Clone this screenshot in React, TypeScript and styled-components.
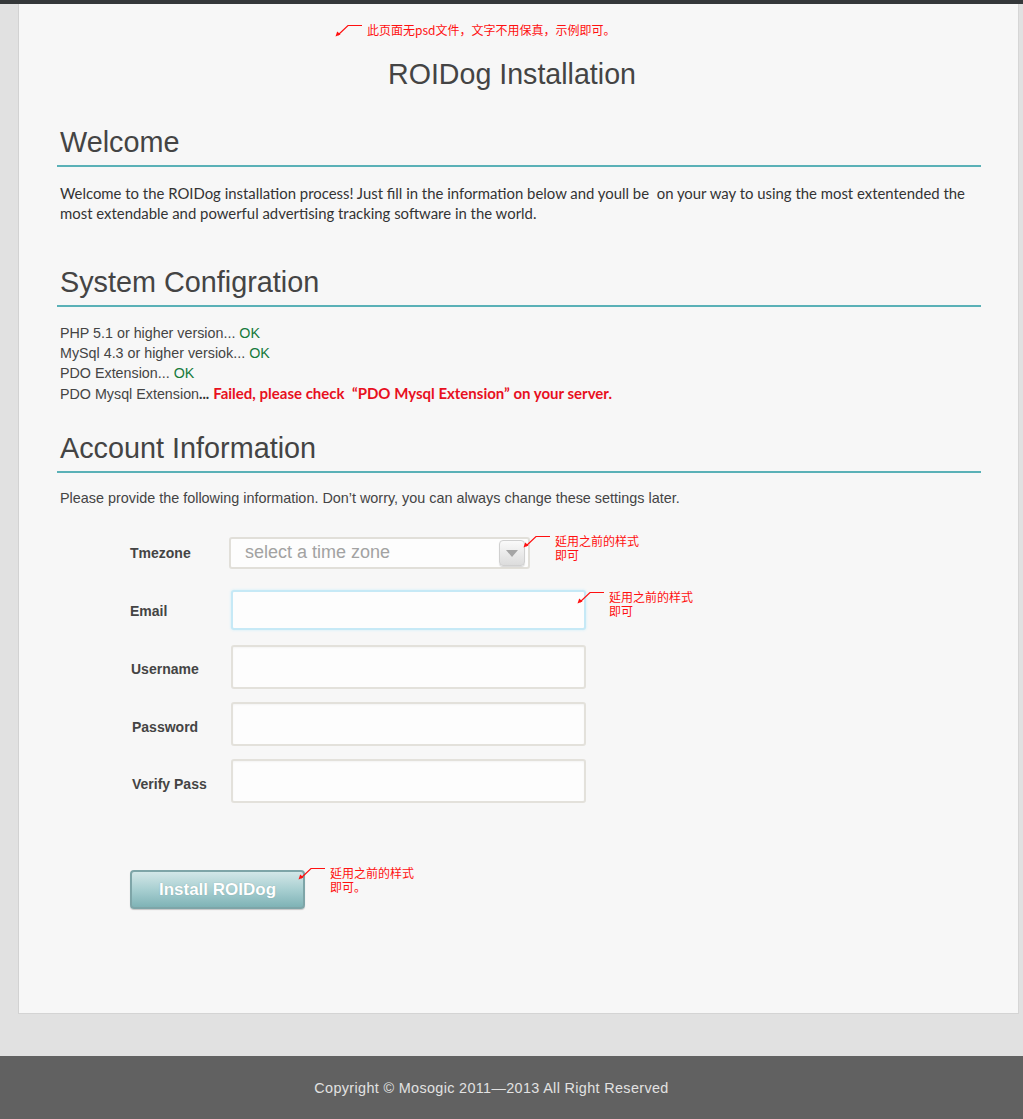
import React from "react";
import styled, { createGlobalStyle } from "styled-components";

const Global = createGlobalStyle`
  html, body { margin: 0; padding: 0; }
  body {
    background: #e1e1e1;
    font-family: "Liberation Sans", Arial, sans-serif;
    color: #444;
  }
`;

const Page = styled.div`
  display: flex;
  flex-direction: column;
  min-height: 1119px;
`;

const TopBar = styled.div`
  height: 4px;
  background: #35383a;
`;

const Panel = styled.main`
  margin: 0 4px 0 18px;
  height: 1010px;
  box-sizing: border-box;
  background: #f7f7f7;
  border-left: 1px solid #d2d2d2;
  border-right: 1px solid #d6d6d6;
  border-bottom: 1px solid #d4d4d4;
  padding-top: 19px;
  display: flex;
  flex-direction: column;
`;

const Note = styled.div`
  display: flex;
  align-items: center;
  gap: 4px;
  padding-left: 316px;
  height: 14px;
`;

const NoteText = styled.span`
  font-family: "Noto Sans CJK SC", "Noto Sans", sans-serif;
  font-size: 12px;
  line-height: 14px;
  color: #ff1010;
  white-space: nowrap;
`;

const Title = styled.h1`
  margin: 21px 13px 0 0;
  font-size: 28.6px;
  line-height: 32px;
  font-weight: normal;
  text-align: center;
  color: #444;
`;

const Section = styled.section<{ $top: number }>`
  margin: ${(p) => p.$top}px 37px 0 38px;
`;

const Heading = styled.h2`
  margin: 0;
  padding: 0 0 7px 3px;
  font-size: 28.8px;
  line-height: 32px;
  font-weight: normal;
  color: #444;
  border-bottom: 2px solid #5ab1b7;
`;

const Paragraph = styled.p`
  margin: 16px 0 0 3px;
  max-width: 920px;
  font-family: Lato, "Open Sans", sans-serif;
  font-size: 14.9px;
  line-height: 20px;
  color: #333;
`;

const CheckList = styled.ul`
  list-style: none;
  margin: 16px 0 0 3px;
  padding: 0;
`;

const CheckItem = styled.li`
  font-size: 14.3px;
  line-height: 20px;
  color: #444;
`;

const Ok = styled.span`
  color: #167a3c;
`;

const Failed = styled.span`
  font-family: Lato, "Open Sans", sans-serif;
  font-weight: bold;
  font-size: 15px;
  color: #e8101e;
`;

const Dots = styled.span`
  font-family: Lato, sans-serif;
  font-weight: bold;
  color: #333;
`;

const Intro = styled.p`
  margin: 15px 0 0 3px;
  font-size: 14.4px;
  line-height: 20px;
  color: #444;
`;

const Form = styled.div`
  margin: 16px 0 0 111px;
  display: flex;
  flex-direction: column;
`;

const Row = styled.div`
  position: relative;
  display: grid;
  grid-template-columns: 99px auto;
  align-items: center;
  height: 57px;
`;

const Label = styled.label<{ $shift?: number; $dy?: number }>`
  font-size: 14px;
  font-weight: bold;
  color: #444;
  padding-left: ${(p) => p.$shift ?? 0}px;
  transform: translateY(${(p) => p.$dy ?? 0}px);
`;

const SelectBox = styled.div`
  width: 301px;
  height: 32px;
  box-sizing: border-box;
  border: 2px solid #e1dfd9;
  border-radius: 3px;
  background: #fdfdfd;
  display: flex;
  align-items: center;
  justify-content: space-between;
  padding: 0 3px 0 14px;
`;

const Placeholder = styled.span`
  font-size: 18px;
  color: #a2a2a2;
`;

const DropButton = styled.span`
  width: 26px;
  height: 26px;
  box-sizing: border-box;
  border: 1px solid #d0d0d0;
  border-radius: 4px;
  background: linear-gradient(#fafafa, #dcdcdc);
  display: flex;
  align-items: center;
  justify-content: center;
  box-shadow: 0 1px 1px rgba(0, 0, 0, 0.15);
  &::after {
    content: "";
    border-left: 6px solid transparent;
    border-right: 6px solid transparent;
    border-top: 7px solid #a5a5a5;
    margin-top: 2px;
  }
`;

const Field = styled.input<{ $focus?: boolean }>`
  width: 355px;
  height: ${(p) => (p.$focus ? 40 : 44)}px;
  box-sizing: border-box;
  margin-left: 2px;
  border: 2px solid ${(p) => (p.$focus ? "#c6e9f6" : "#e3e1db")};
  border-radius: 3px;
  background: #fdfdfd;
  box-shadow: ${(p) =>
    p.$focus ? "0 0 3px #cdeef9" : "inset 0 1px 2px rgba(0,0,0,0.04)"};
  outline: none;
  font-size: 14px;
  padding: 0 10px;
`;

const ButtonRow = styled.div`
  position: relative;
  margin: 61px 0 0 111px;
`;

const InstallButton = styled.button`
  width: 175px;
  height: 39px;
  border: 2px solid #7ea5a8;
  border-radius: 4px;
  background: linear-gradient(#d3e7e8 0%, #a8cfd1 50%, #7fb3b6 100%);
  color: #fff;
  font-family: "Liberation Sans", Arial, sans-serif;
  font-weight: bold;
  font-size: 17px;
  text-shadow: 0 0 1px rgba(80, 120, 122, 0.5);
  box-shadow: 0 1px 1px rgba(0, 0, 0, 0.2);
  cursor: pointer;
`;

const Annotation = styled.div<{ $left: number; $top: number }>`
  position: absolute;
  left: ${(p) => p.$left}px;
  top: ${(p) => p.$top}px;
  display: flex;
  align-items: flex-start;
  gap: 4px;
`;

const AnnoText = styled.span`
  font-family: "Noto Sans CJK SC", "Noto Sans", sans-serif;
  font-size: 12px;
  line-height: 14px;
  color: #ff1010;
  white-space: pre;
`;

const Spacer = styled.div`
  flex: 1;
`;

const Footer = styled.footer`
  height: 63px;
  background: #616161;
  display: flex;
  align-items: center;
  justify-content: center;
  padding-right: 40px;
  color: #e2e2e2;
  font-size: 14.4px;
  letter-spacing: 0.35px;
`;

const Arrow = () => (
  <svg width="28" height="14" viewBox="0 0 28 14">
    <path d="M27 2.5H13L3 12" stroke="#ff1010" strokeWidth="1.2" fill="none" />
    <path d="M0.5 13.5L2.2 8.5L5.5 11.5Z" fill="#ff1010" />
  </svg>
);

export default function App() {
  return (
    <Page>
      <Global />
      <TopBar />
      <Panel>
        <Note>
          <Arrow />
          <NoteText>此页面无psd文件，文字不用保真，示例即可。</NoteText>
        </Note>
        <Title>ROIDog Installation</Title>

        <Section $top={36}>
          <Heading>Welcome</Heading>
          <Paragraph>
            Welcome to the ROIDog installation process! Just fill in the information below and youll be&nbsp; on your way to using the most extentended the most extendable and powerful advertising tracking software in the world.
          </Paragraph>
        </Section>

        <Section $top={43}>
          <Heading>System Configration</Heading>
          <CheckList>
            <CheckItem>PHP 5.1 or higher version... <Ok>OK</Ok></CheckItem>
            <CheckItem>MySql 4.3 or higher versiok... <Ok>OK</Ok></CheckItem>
            <CheckItem>PDO Extension... <Ok>OK</Ok></CheckItem>
            <CheckItem>
              PDO Mysql Extension<Dots>...</Dots>{" "}
              <Failed>Failed, please check &nbsp;“PDO Mysql Extension” on your server.</Failed>
            </CheckItem>
          </CheckList>
        </Section>

        <Section $top={28}>
          <Heading>Account Information</Heading>
          <Intro>Please provide the following information. Don’t worry, you can always change these settings later.</Intro>
        </Section>

        <Form>
          <Row>
            <Label>Tmezone</Label>
            <SelectBox>
              <Placeholder>select a time zone</Placeholder>
              <DropButton />
            </SelectBox>
            <Annotation $left={393} $top={10}>
              <Arrow />
              <AnnoText>{"延用之前的样式\n即可"}</AnnoText>
            </Annotation>
          </Row>
          <Row>
            <Label $dy={1}>Email</Label>
            <Field $focus />
            <Annotation $left={447} $top={9}>
              <Arrow />
              <AnnoText>{"延用之前的样式\n即可"}</AnnoText>
            </Annotation>
          </Row>
          <Row>
            <Label $shift={1} $dy={2}>Username</Label>
            <Field />
          </Row>
          <Row>
            <Label $shift={2} $dy={3}>Password</Label>
            <Field />
          </Row>
          <Row>
            <Label $shift={2} $dy={3}>Verify Pass</Label>
            <Field />
          </Row>
        </Form>

        <ButtonRow>
          <InstallButton>Install ROIDog</InstallButton>
          <Annotation $left={168} $top={-4}>
            <Arrow />
            <AnnoText>{"延用之前的样式\n即可。"}</AnnoText>
          </Annotation>
        </ButtonRow>
        <Spacer />
      </Panel>
      <Spacer />
      <Footer>Copyright © Mosogic 2011—2013 All Right Reserved</Footer>
    </Page>
  );
}
